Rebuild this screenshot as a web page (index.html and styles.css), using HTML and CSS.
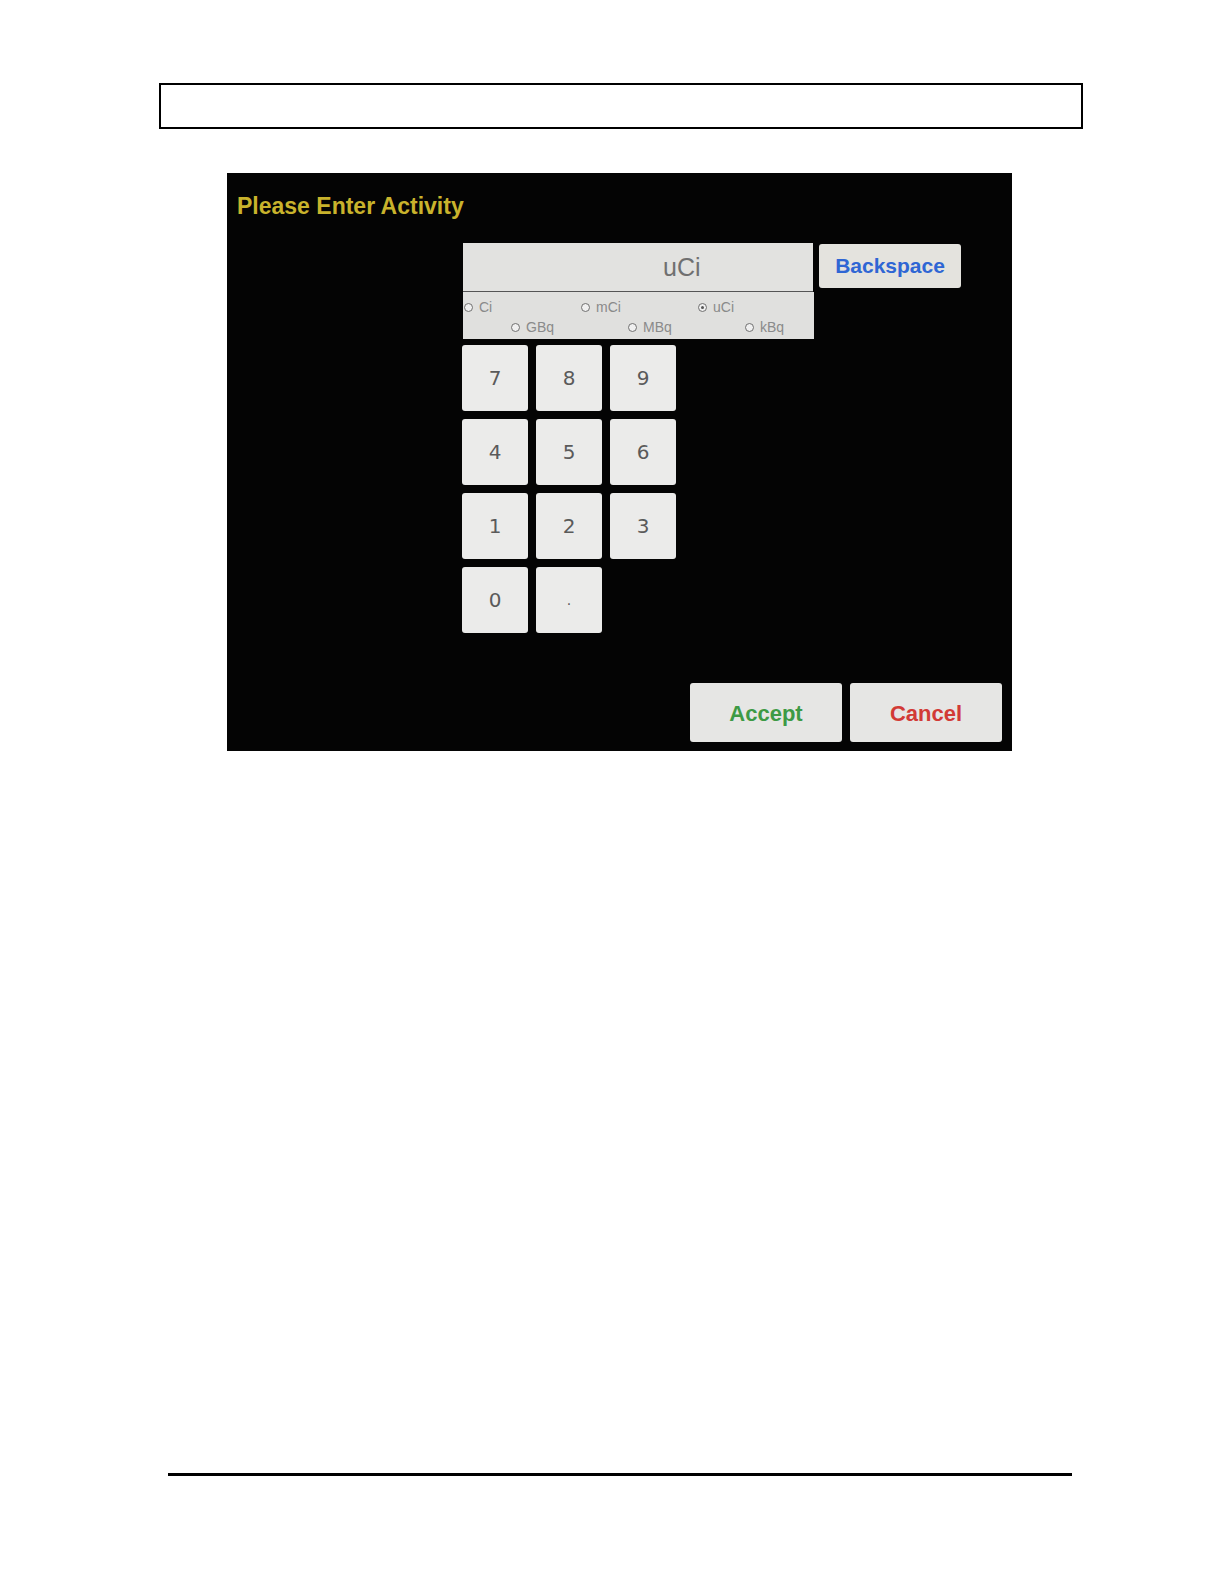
FILE: index.html
```html
<!DOCTYPE html>
<html>
<head>
<meta charset="utf-8">
<link rel="stylesheet" href="styles.css">
</head>
<body>
<div class="page">
  <div class="header-box"></div>
  <div class="screen">
    <div class="title">Please Enter Activity</div>
    <div class="entry">
      <div class="entry-main">
        <div class="display">uCi</div>
        <div class="units">
          <div class="unit-row row1">
            <div class="opt"><span class="radio"></span>Ci</div>
            <div class="opt"><span class="radio"></span>mCi</div>
            <div class="opt"><span class="radio on"></span>uCi</div>
          </div>
          <div class="unit-row row2">
            <div class="opt"><span class="radio"></span>GBq</div>
            <div class="opt"><span class="radio"></span>MBq</div>
            <div class="opt"><span class="radio"></span>kBq</div>
          </div>
        </div>
        <div class="keypad">
          <div class="key">7</div><div class="key">8</div><div class="key">9</div>
          <div class="key">4</div><div class="key">5</div><div class="key">6</div>
          <div class="key">1</div><div class="key">2</div><div class="key">3</div>
          <div class="key">0</div><div class="key dot">.</div>
        </div>
      </div>
      <div class="backspace">Backspace</div>
    </div>
    <div class="actions">
      <div class="btn accept">Accept</div>
      <div class="btn cancel">Cancel</div>
    </div>
  </div>
  <div class="footer-line"></div>
</div>
</body>
</html>
```
FILE: styles.css
```css
html, body {
  margin: 0;
  padding: 0;
  background: #ffffff;
}
.page {
  width: 1224px;
  height: 1584px;
  padding-top: 83px;
  box-sizing: border-box;
  position: relative;
}
.header-box {
  margin-left: 159px;
  width: 920px;
  height: 42px;
  border: 2px solid #000;
}
.screen {
  margin-top: 44px;
  margin-left: 227px;
  width: 785px;
  height: 578px;
  background: #040404;
  box-sizing: border-box;
  padding: 20px 0 0 10px;
  display: flex;
  flex-direction: column;
  font-family: "Liberation Sans", Arial, sans-serif;
}
.title {
  color: #c9b32c;
  font-size: 23px;
  font-weight: bold;
  line-height: 26px;
  height: 26px;
}
.entry {
  margin-top: 24px;
  margin-left: 225px;
  display: flex;
  align-items: flex-start;
}
.entry-main {
  display: flex;
  flex-direction: column;
}
.display {
  margin-left: 1px;
  width: 350px;
  height: 49px;
  background: #e2e2e0;
  color: #707070;
  font-size: 25px;
  line-height: 49px;
  padding-left: 200px;
  box-sizing: border-box;
  border-bottom: 1px solid #555;
}
.units {
  margin-left: 1px;
  width: 351px;
  height: 47px;
  background: #e0e0de;
  box-sizing: border-box;
  padding-top: 6px;
  display: flex;
  flex-direction: column;
  gap: 2px;
}
.unit-row {
  display: grid;
  grid-template-columns: 117px 117px 117px;
  height: 18px;
}
.row1 { padding-left: 1px; }
.row2 { padding-left: 48px; }
.opt {
  display: flex;
  align-items: center;
  gap: 6px;
  color: #8a8a8a;
  font-size: 14px;
  line-height: 18px;
  font-family: "Liberation Sans", Arial, sans-serif;
}
.radio {
  width: 7px;
  height: 7px;
  border: 1.5px solid #707070;
  border-radius: 50%;
  box-sizing: content-box;
  position: relative;
  background: #f0f0f0;
}
.radio.on::after {
  content: "";
  position: absolute;
  left: 2px;
  top: 2px;
  width: 3px;
  height: 3px;
  border-radius: 50%;
  background: #555;
}
.keypad {
  margin-top: 6px;
  display: grid;
  grid-template-columns: 66px 66px 66px;
  grid-auto-rows: 66px;
  column-gap: 8px;
  row-gap: 8px;
}
.key {
  background: #ebebea;
  border-radius: 3px;
  display: flex;
  align-items: center;
  justify-content: center;
  font-family: "DejaVu Sans", Verdana, sans-serif;
  font-size: 20px;
  color: #5a5a5a;
}
.key.dot {
  font-size: 14px;
}
.backspace {
  margin-left: 5px;
  margin-top: 1px;
  width: 142px;
  height: 44px;
  background: #e4e3de;
  border-radius: 3px;
  color: #2f66d4;
  font-size: 21px;
  font-weight: bold;
  display: flex;
  align-items: center;
  justify-content: center;
}
.actions {
  margin-top: auto;
  margin-bottom: 9px;
  margin-right: 10px;
  display: flex;
  justify-content: flex-end;
  gap: 8px;
}
.btn {
  width: 152px;
  height: 59px;
  background: #e6e6e4;
  border-radius: 3px;
  font-size: 22px;
  font-weight: bold;
  display: flex;
  align-items: center;
  justify-content: center;
  box-sizing: border-box;
  padding-top: 2px;
}
.accept { color: #3d9a45; }
.cancel { color: #d23a36; }
.footer-line {
  position: absolute;
  left: 168px;
  top: 1473px;
  width: 904px;
  height: 3px;
  background: #000;
}
```
